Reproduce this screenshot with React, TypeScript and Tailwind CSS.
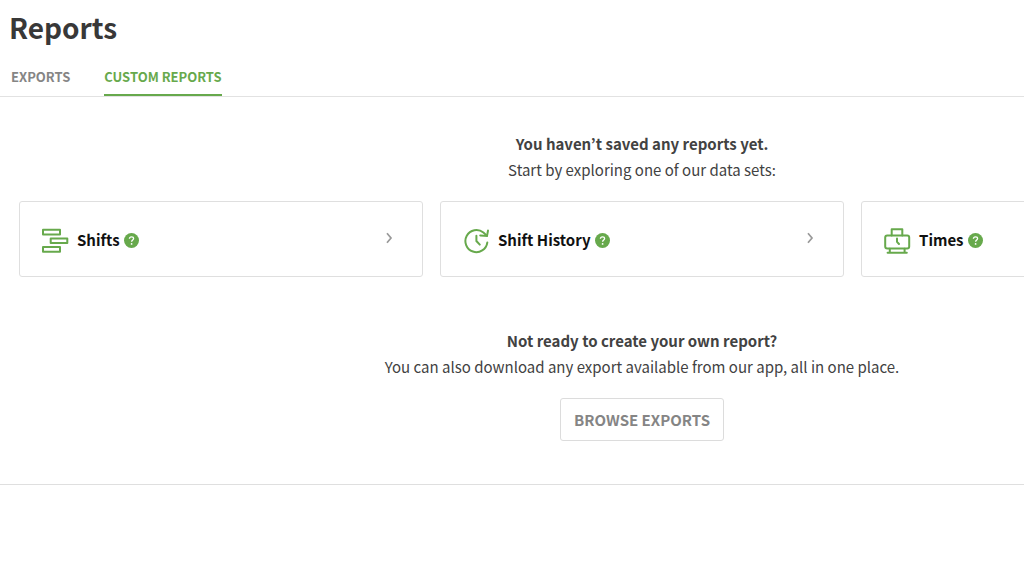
import type { ReactNode } from 'react'

const TABS = [
  { id: 'exports', label: 'EXPORTS', active: false },
  { id: 'custom', label: 'CUSTOM REPORTS', active: true }
]

function ShiftsIcon() {
  return (
    <svg width="28" height="28" viewBox="0 0 28 28" fill="none" stroke="#67a94c" strokeWidth="2" strokeLinejoin="round" aria-hidden="true">
      <rect x="2" y="3.8" width="17" height="4.6" />
      <rect x="9.7" y="12.4" width="16.6" height="4.6" />
      <rect x="2" y="21.1" width="17" height="4.6" />
    </svg>
  )
}

function HistoryIcon() {
  return (
    <svg width="28" height="28" viewBox="0 0 28 28" fill="none" stroke="#67a94c" strokeWidth="2" strokeLinecap="round" aria-hidden="true">
      <path d="M25.3 16.6A11 11 0 1 1 21.4 6.6L24.6 9.4" />
      <path d="M26 4.6L25 10L18.2 9.4" />
      <path d="M14.4 9.7V15L17.8 18.6" />
    </svg>
  )
}

function TimesIcon() {
  return (
    <svg width="28" height="28" viewBox="0 0 28 28" fill="none" stroke="#67a94c" strokeWidth="2" strokeLinecap="round" strokeLinejoin="round" aria-hidden="true">
      <path d="M8.7 9.4V3.2H19.3V9.4" />
      <rect x="2.2" y="9.5" width="24" height="13" rx="2" />
      <path d="M6.8 22.8V26.4M21.6 22.8V26.4M4.6 26.8H23.8" />
      <path d="M14 12.6V15.8L16 18" />
    </svg>
  )
}

const DATA_SETS: { title: string; icon: ReactNode }[] = [
  { title: 'Shifts', icon: <ShiftsIcon /> },
  { title: 'Shift History', icon: <HistoryIcon /> },
  { title: 'Times', icon: <TimesIcon /> }
]

function HelpIcon() {
  return (
    <svg width="15" height="15" viewBox="0 0 15 15" fill="none" aria-hidden="true">
      <circle cx="7.5" cy="7.5" r="7.5" fill="#67a94c" />
      <path d="M5.4 5.8C5.5 4.5 6.3 3.8 7.5 3.8C8.8 3.8 9.6 4.6 9.6 5.6C9.6 7 7.6 7.1 7.6 8.8" stroke="#fff" strokeWidth="1.3" />
      <circle cx="7.6" cy="10.9" r="0.9" fill="#fff" />
    </svg>
  )
}

function DataSetCard({ title, icon }: { title: string; icon: ReactNode }) {
  return (
    <a href="#" className="flex h-[76px] items-center rounded-[3px] border border-[#dfdfdf] pl-[21px] pr-[29px] pt-0.5">
      {icon}
      <span className="ml-2 text-[15px] leading-6 font-bold text-[#111]">{title}</span>
      <span className="ml-1">
        <HelpIcon />
      </span>
      <svg width="8" height="12" viewBox="0 0 8 12" fill="none" stroke="#999" strokeWidth="1.7" className="mb-1 ml-auto" aria-hidden="true">
        <path d="M2 1.2L6 6L2 10.8" />
      </svg>
    </a>
  )
}

export default function App() {
  return (
    <div className="overflow-hidden bg-white font-['Noto_Sans_CJK_KR',sans-serif] text-[#424242]">
      <div className="min-w-[1284px]">
        <header className="border-b border-[#e2e2e2] pt-[7px]">
          <h1 className="pl-[9px] text-[28px] leading-10 font-bold text-[#383838]">Reports</h1>
          <nav className="mt-[18px] flex gap-[34px] pl-[11px]">
            {TABS.map(({ id, label, active }) => (
              <a
                key={id}
                href="#"
                className={`border-b-2 pb-[5px] text-[13px] leading-6 font-bold ${
                  active ? 'border-[#67a94c] text-[#67a94c]' : 'border-transparent text-[#858585]'
                }`}
              >
                {label}
              </a>
            ))}
          </nav>
        </header>

        <main className="border-b border-[#dfdfdf] px-[19px] pt-[34px] pb-[43px] text-center">
          <section className="text-[15px] leading-[26px]">
            <h2 className="font-bold">You haven’t saved any reports yet.</h2>
            <p>Start by exploring one of our data sets:</p>
            <div className="mt-[18px] grid grid-cols-3 gap-[17px]">
              {DATA_SETS.map((set) => (
                <DataSetCard key={set.title} title={set.title} icon={set.icon} />
              ))}
            </div>
          </section>

          <section className="mt-[51px] text-[15px] leading-[26px]">
            <h2 className="font-bold">Not ready to create your own report?</h2>
            <p>You can also download any export available from our app, all in one place.</p>
            <button className="mt-[18px] h-[43px] rounded-[3px] border border-[#dcdcdc] px-[13px] text-[15px] font-bold text-[#858585]">
              BROWSE EXPORTS
            </button>
          </section>
        </main>
      </div>
    </div>
  )
}
